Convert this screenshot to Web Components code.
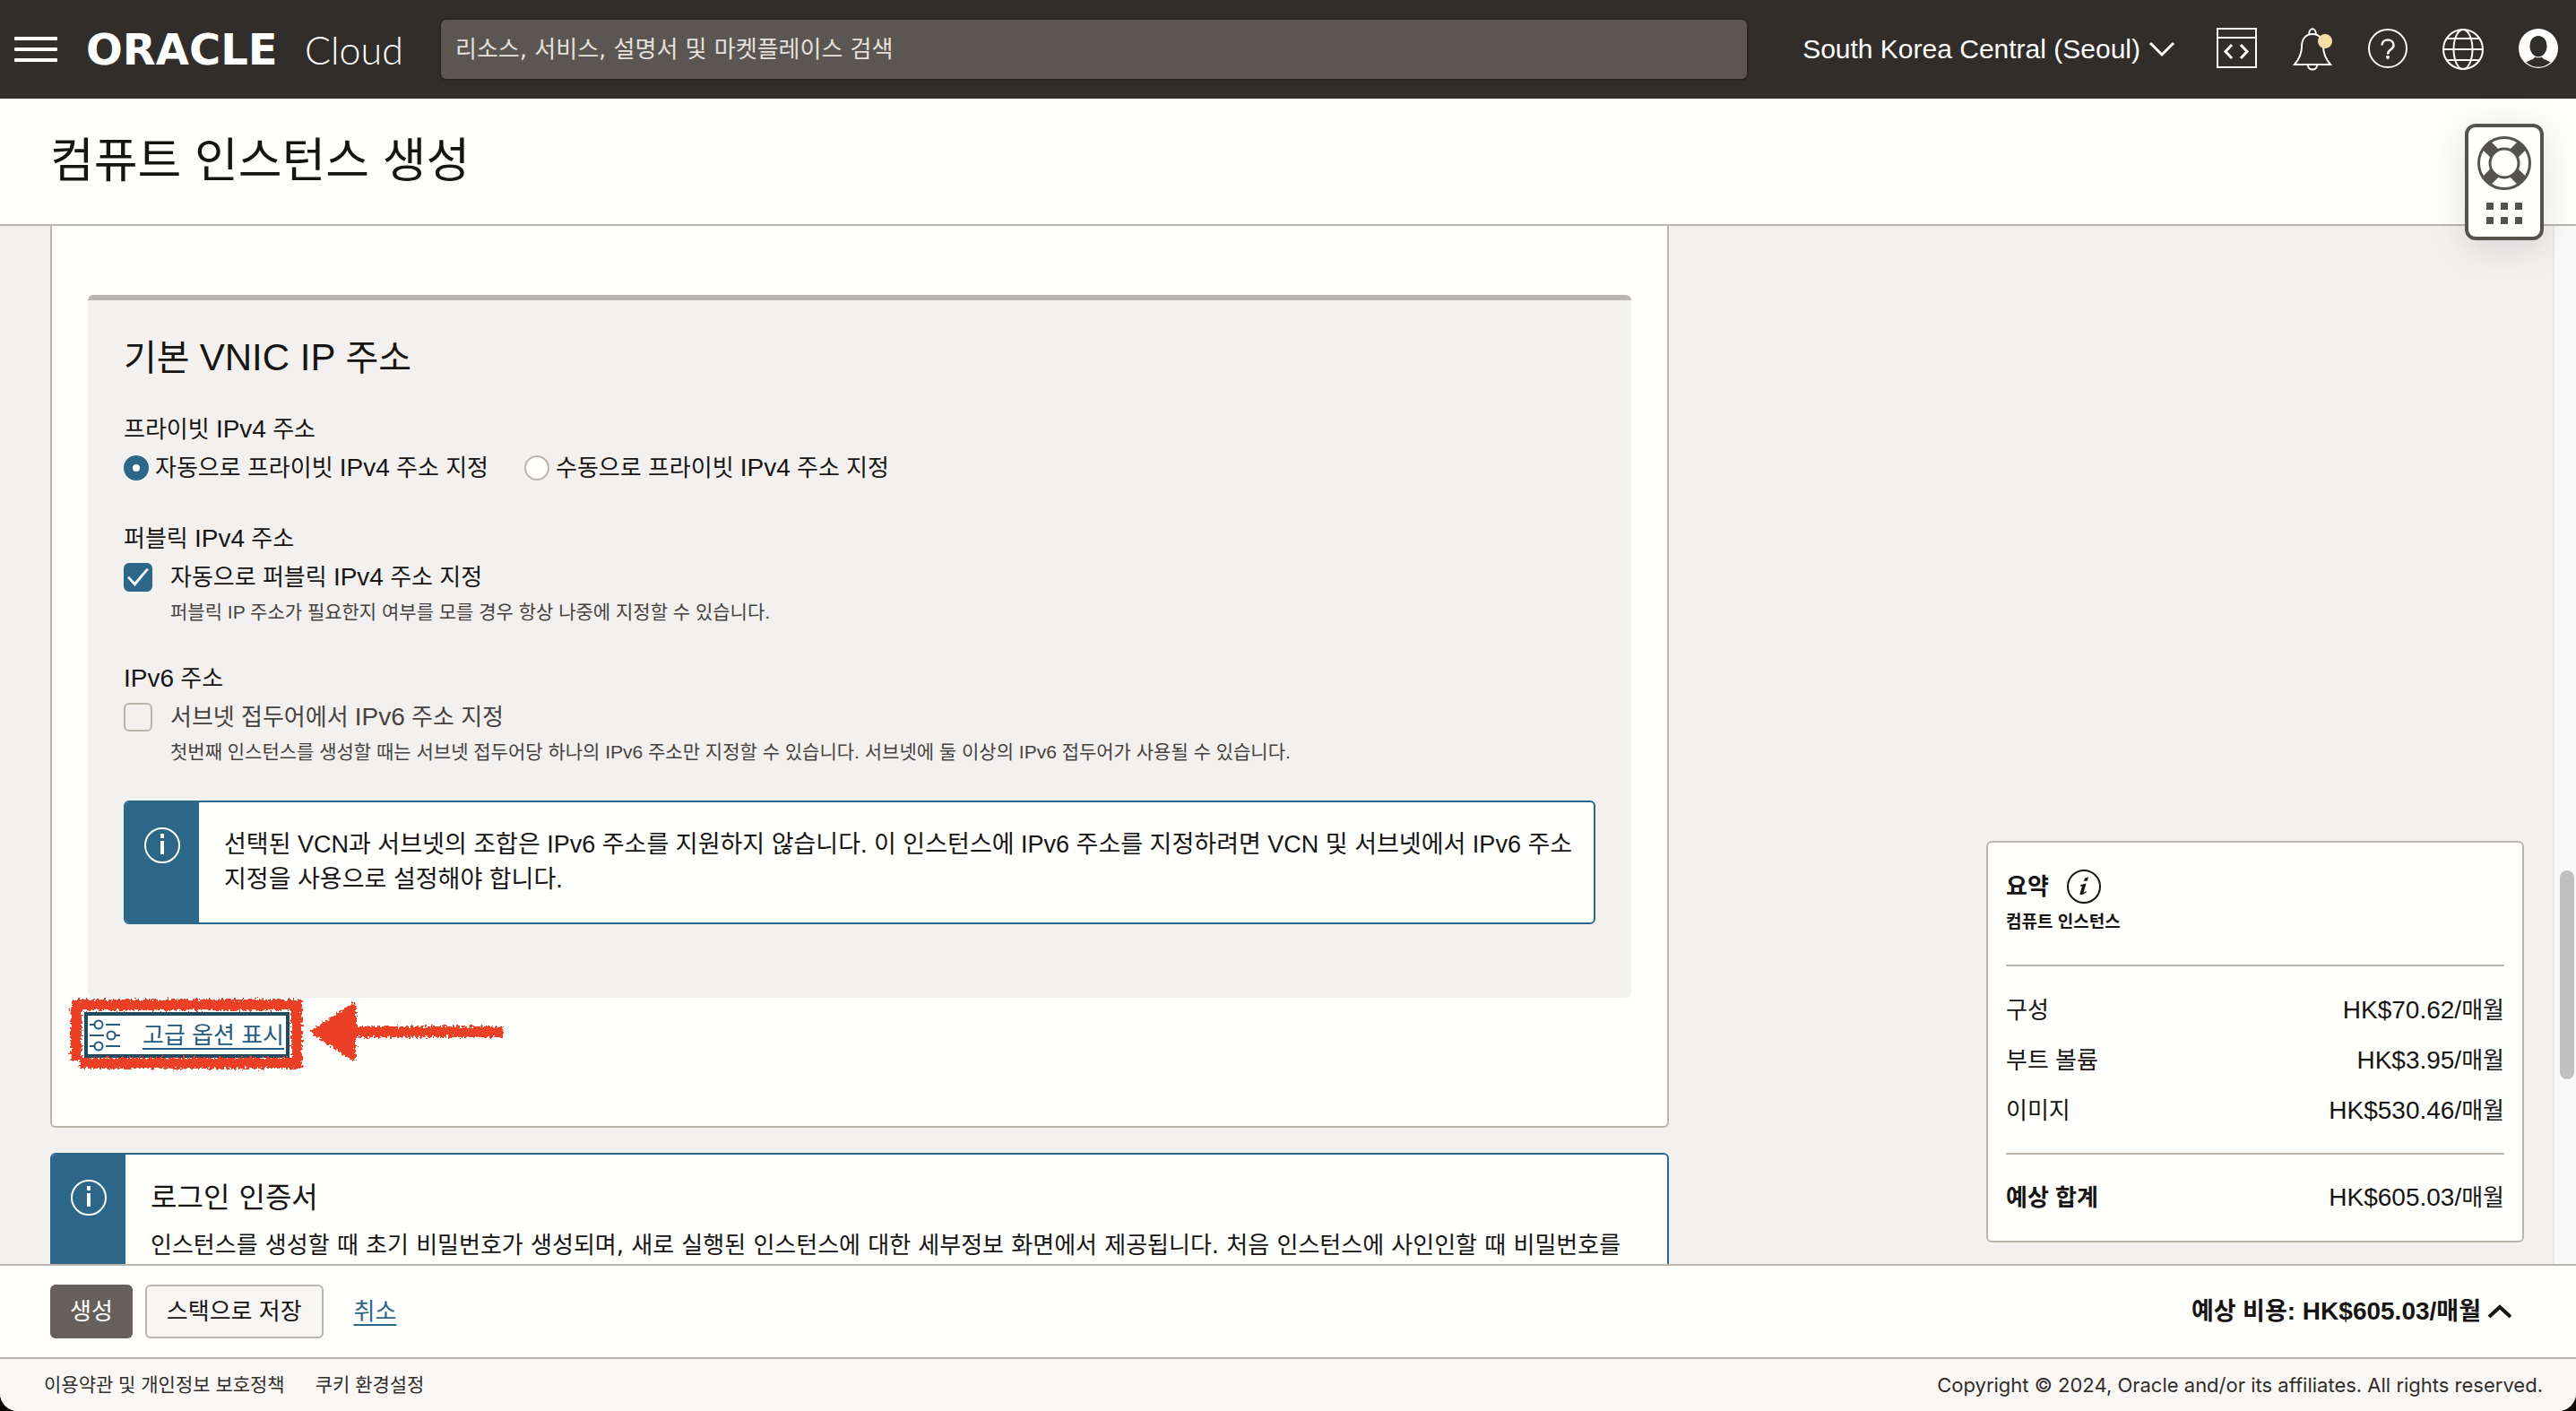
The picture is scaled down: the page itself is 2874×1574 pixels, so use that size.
<!DOCTYPE html>
<html lang="ko">
<head>
<meta charset="utf-8">
<title>컴퓨트 인스턴스 생성</title>
<style>
  html, body { margin: 0; height: 100%; }
  body {
    background: #0c0705;
    color: #161513;
    font: 26px/40px "Liberation Sans", "Noto Sans CJK KR", sans-serif;
    word-break: keep-all;
    --dark: #312d2a;
    --paper: #fefefc;
    --gray: #f3f1f0;
    --line: #bbb5b0;
    --blue: #2c6689;
    --muted: #45423f;
  }
  .en { font-size: 28px; }
  .en-lg { font-size: 42px; }
</style>
</head>
<body>
<oci-app>
  <oci-header slot="header"></oci-header>
  <oci-title slot="title">컴퓨트 인스턴스 생성</oci-title>

  <oci-card slot="content">
    <oci-panel>
      <span slot="heading">기본 <span class="en-lg" lang="en">VNIC IP</span> 주소</span>
      <oci-radio-group></oci-radio-group>
      <oci-check checked>
        <span slot="legend">퍼블릭 <span class="en" lang="en">IPv4</span> 주소</span>
        자동으로 퍼블릭 <span class="en" lang="en">IPv4</span> 주소 지정
        <span slot="hint">퍼블릭 IP 주소가 필요한지 여부를 모를 경우 항상 나중에 지정할 수 있습니다.</span>
      </oci-check>
      <oci-check disabled>
        <span slot="legend"><span class="en" lang="en">IPv6</span> 주소</span>
        서브넷 접두어에서 <span class="en" lang="en">IPv6</span> 주소 지정
        <span slot="hint">첫번째 인스턴스를 생성할 때는 서브넷 접두어당 하나의 IPv6 주소만 지정할 수 있습니다. 서브넷에 둘 이상의 IPv6 접두어가 사용될 수 있습니다.</span>
      </oci-check>
      <oci-alert>선택된 VCN과 서브넷의 조합은 IPv6 주소를 지원하지 않습니다. 이 인스턴스에 IPv6 주소를 지정하려면 VCN 및 서브넷에서 IPv6 주소 지정을 사용으로 설정해야 합니다.</oci-alert>
    </oci-panel>
    <oci-advanced></oci-advanced>
  </oci-card>
  <oci-alert slot="content">
    <span slot="title">로그인 인증서</span>
    인스턴스를 생성할 때 초기 비밀번호가 생성되며, 새로 실행된 인스턴스에 대한 세부정보 화면에서 제공됩니다. 처음 인스턴스에 사인인할 때 비밀번호를
  </oci-alert>

  <oci-summary slot="aside"></oci-summary>
  <oci-actions slot="actions"></oci-actions>
  <oci-footer slot="footer"></oci-footer>
  <oci-help-widget slot="overlay"></oci-help-widget>
</oci-app>

<script>
const base = `
  :host, *, *::before, *::after { box-sizing: border-box; }
  button, input { font: inherit; color: inherit; }
  button { border: 0; padding: 0; background: none; cursor: pointer; }
  svg { display: block; overflow: visible; flex: none; }
  .en { font-size: 28px; }
`;

function define(name, css, html) {
  const template = document.createElement('template');
  template.innerHTML = `<style>${base}${css}</style>${html}`;
  customElements.define(name, class extends HTMLElement {
    constructor() {
      super();
      this.attachShadow({ mode: 'open' }).append(template.content.cloneNode(true));
    }
    connectedCallback() {
      const box = this.shadowRoot.querySelector('input[type=checkbox]');
      if (box) {
        box.checked = this.hasAttribute('checked');
        box.disabled = this.hasAttribute('disabled');
      }
    }
  });
}

define('oci-app', `
  :host { display: flex; flex-direction: column; height: 100vh; overflow: hidden; border-radius: 0 0 20px 20px; background: var(--gray); }
  main { flex: 1; min-height: 0; display: flex; overflow: hidden; }
  .body { flex: 1; min-width: 0; display: flex; justify-content: space-between; gap: 56px; padding: 0 32px 0 56px; }
  .content { flex: 0 1 1806px; min-width: 0; display: flex; flex-direction: column; gap: 28px; }
  .content ::slotted(*) { flex: none; }
  .aside { flex: none; align-self: flex-end; width: 600px; padding-bottom: 24px; }
  .track { flex: none; width: 26px; display: flex; flex-direction: column; padding: 0 2px 0 6px; border-left: 2px solid #e8e8e8; background: #fafafa; }
  .track::before { content: ""; flex: 719; }
  .thumb { flex: 233; border-radius: 8px; background: #c1c1c1; }
  .track::after { content: ""; flex: 206; }
`, `
  <slot name="header"></slot>
  <slot name="title"></slot>
  <main>
    <div class="body">
      <div class="content"><slot name="content"></slot></div>
      <div class="aside"><slot name="aside"></slot></div>
    </div>
    <div class="track"><div class="thumb"></div></div>
  </main>
  <slot name="actions"></slot>
  <slot name="footer"></slot>
  <slot name="overlay"></slot>
`);

define('oci-header', `
  :host { display: flex; flex: none; align-items: center; height: 110px; padding: 0 20px 0 16px; background: var(--dark); color: #fff; }
  .menu { flex: none; display: flex; flex-direction: column; gap: 8px; width: 48px; }
  .menu i { height: 4px; border-radius: 1px; background: #fff; }
  .brand { flex: none; width: 396px; margin-left: 32px; display: flex; align-items: baseline; color: #fff; text-decoration: none; line-height: 52px; white-space: nowrap; }
  .brand b { flex: none; width: 244px; font: 700 48px/52px "DejaVu Sans", sans-serif; }
  .brand span { font: 300 43px/52px Lato, sans-serif; }
  .search { flex: 1; min-width: 0; height: 66px; padding: 0 16px; border: 0; border-radius: 6px; background: #5b5651; color: #e4e1dd; font-family: "DejaVu Sans", "Noto Sans CJK KR", sans-serif; box-shadow: 0 0 0 2px #292522; outline: 0; }
  .search::placeholder { color: #e4e1dd; opacity: 1; }
  .region { flex: none; display: flex; align-items: center; gap: 10px; margin: 0 48px 0 62px; font-size: 30px; white-space: nowrap; }
  .icons { display: flex; gap: 40px; }
  .line { fill: none; stroke: #fff; stroke-width: 2; }
`, `
  <button class="menu" aria-label="메뉴"><i></i><i></i><i></i></button>
  <a class="brand" href="#"><b>ORACLE</b><span>Cloud</span></a>
  <input class="search" type="search" aria-label="검색" placeholder="리소스, 서비스, 설명서 및 마켓플레이스 검색">
  <button class="region">South Korea Central (Seoul)
    <svg width="28" height="16" viewBox="0 0 28 16"><path class="line" style="stroke-width:3" d="M1 1l13 13L27 1"/></svg>
  </button>
  <div class="icons">
    <button aria-label="개발자 도구"><svg width="44" height="44"><g class="line"><path d="M0-1h43v43H0zM0 9h43"/><path style="stroke-width:3" d="M16 17l-7 7.500 7 7.500M26 17l7 7.500-7 7.500"/></g></svg></button>
    <button aria-label="알림"><svg width="44" height="44"><g class="line"><path d="M18 6c0-9 8-9 8 0M2 39c5-6 8-12 8-20 0-8 4-14 12-14s12 6 12 14 3 14 8 20zM17 40c0 6 10 6 10 0"/></g><circle cx="36" cy="13" r="8" fill="#f5dfa5"/></svg></button>
    <button aria-label="도움말"><svg width="44" height="44"><g class="line"><circle cx="22" cy="21" r="21"/><path style="stroke-width:2.500" d="M15.500 17.500c0-8 13-8 13 0 0 5-6.500 4.500-6.500 10"/></g><circle cx="22" cy="31" r="2" fill="#fff"/></svg></button>
    <button aria-label="언어"><svg width="44" height="44"><g class="line"><circle cx="22" cy="22" r="22"/><ellipse cx="22" cy="22" rx="10.500" ry="22"/><path d="M4 10h36M0 22h44M4 34h36"/></g></svg></button>
    <button aria-label="프로필"><svg width="44" height="44"><circle cx="22" cy="21" r="22" fill="#fff"/><path fill="#312d2a" d="M22 7c6 0 9.500 5 9.500 11.500 0 5-2.500 9-5.500 10.800-2 1.300-6 1.300-8 0-3-1.800-5.500-5.800-5.500-10.800C12.500 12 16 7 22 7zM18 30.500c2 1.200 6 1.200 8 0 1 3 5 3 9.500 6C28 43.500 16 43.500 8.500 36.500c4.500-3 8.500-3 9.500-6z"/></svg></button>
  </div>
`);

define('oci-title', `
  :host { display: block; flex: none; height: 142px; border-bottom: 2px solid var(--line); background: var(--paper); }
  h1 { margin: 0; padding: 38px 56px 0; font-size: 53px; line-height: 64px; font-weight: 400; }
`, `<h1><slot></slot></h1>`);

define('oci-card', `
  :host { display: block; padding: 77px 40px 80px; border: 2px solid var(--line); border-top: 0; border-radius: 0 0 6px 6px; background: var(--paper); }
`, `<slot></slot>`);

define('oci-panel', `
  :host { display: flex; flex-direction: column; gap: 36px; padding: 40px 40px 82px; border-top: 6px solid var(--line); border-radius: 6px; background: var(--gray); }
  h2 { margin: 0; font-size: 40px; line-height: 48px; font-weight: 400; }
`, `<h2><slot name="heading"></slot></h2><slot></slot>`);

define('oci-radio-group', `
  :host { display: block; }
  .legend { line-height: 40px; }
  .row { display: flex; gap: 40px; }
  label { display: flex; align-items: center; gap: 7px; height: 46px; }
  input { appearance: none; flex: none; width: 28px; height: 28px; margin: 0; border: 2px solid var(--line); border-radius: 50%; background: var(--paper); }
  input:checked { border: 10px solid var(--blue); }
`, `
  <div role="radiogroup" aria-labelledby="legend">
    <div class="legend" id="legend">프라이빗 <span class="en" lang="en">IPv4</span> 주소</div>
    <div class="row">
      <label><input type="radio" name="private" checked><span>자동으로 프라이빗 <span class="en" lang="en">IPv4</span> 주소 지정</span></label>
      <label><input type="radio" name="private"><span>수동으로 프라이빗 <span class="en" lang="en">IPv4</span> 주소 지정</span></label>
    </div>
  </div>
`);

define('oci-check', `
  :host { display: block; }
  .legend { line-height: 40px; }
  label { display: flex; align-items: center; gap: 20px; height: 46px; }
  :host([disabled]) label { color: var(--muted); }
  input { appearance: none; flex: none; display: grid; place-items: center; width: 32px; height: 32px; margin: 0; border: 2px solid var(--line); border-radius: 6px; background: transparent; }
  input:checked { border-color: var(--blue); background: var(--blue); }
  input:checked::before { content: ""; width: 24px; height: 20px; background: #fff; clip-path: polygon(0 52%, 8% 44%, 34% 78%, 90% 0, 100% 6%, 35% 100%); }
  .hint { padding: 0 0 2px 52px; font-size: 21px; line-height: 32px; color: var(--muted); }
`, `
  <div class="legend"><slot name="legend"></slot></div>
  <label><input type="checkbox"><span><slot></slot></span></label>
  <div class="hint"><slot name="hint"></slot></div>
`);

define('oci-alert', `
  :host { display: flex; border: 2px solid var(--blue); border-radius: 6px; background: var(--paper); overflow: hidden; }
  .mark { flex: none; width: 82px; padding: 28px 0 0 21px; background: var(--blue); }
  .text { padding: 28px 20px 28px 28px; font-size: 27px; line-height: 39px; }
  .title { display: none; }
  :host([slot]) .text { padding-top: 24px; font-family: "DejaVu Sans", "Noto Sans CJK KR", sans-serif; font-size: 26px; }
  :host([slot]) .title { display: block; margin-bottom: 10px; font-size: 32px; line-height: 48px; }
`, `
  <div class="mark"><svg width="40" height="40"><circle cx="20" cy="20" r="19" fill="none" stroke="#fff" stroke-width="2"/><path fill="#fff" d="M18 7h4v5h-4zM18 15h4v15h-4z"/></svg></div>
  <div class="text"><div class="title"><slot name="title"></slot></div><slot></slot></div>
`);

define('oci-advanced', `
  :host { display: block; position: relative; width: max-content; margin-top: 20px; }
  a { display: flex; align-items: center; gap: 25px; height: 43px; padding: 0 2px; outline: 4px solid #204a60; color: #285b80; text-underline-offset: 5px; text-decoration-thickness: 2px; }
  .pencil { position: absolute; left: -28px; top: -33px; pointer-events: none; }
`, `
  <a href="#"><svg width="34" height="36" fill="none" stroke="#285b80" stroke-width="2"><path d="M0 6h5M18 6h16M0 18h16M29 18h5M0 30h5M18 30h16"/><circle cx="10" cy="6" r="4.500"/><circle cx="24" cy="18" r="4.500"/><circle cx="10" cy="30" r="4.500"/></svg>고급 옵션 표시</a>
  <svg class="pencil" width="500" height="110" viewBox="0 0 500 110">
    <filter id="rough" x="-5%" y="-10%" width="110%" height="120%">
      <feTurbulence type="fractalNoise" baseFrequency="0.35" numOctaves="2" seed="4" result="n"/>
      <feDisplacementMap in="SourceGraphic" in2="n" scale="9" xChannelSelector="R" yChannelSelector="G"/>
    </filter>
    <g filter="url(#rough)" fill="none" stroke="#ec4126" stroke-width="12">
      <path d="M10 21H262M261 15V91M266 86H19M15 17V83"/>
      <path d="M320 51H491"/>
      <path fill="#ec4126" stroke-width="6" stroke-linejoin="round" d="M280 51L324 22V80z"/>
    </g>
  </svg>
`);

define('oci-summary', `
  :host { display: block; padding: 26px 20px 20px; border: 2px solid var(--line); border-radius: 6px; background: var(--paper); }
  .head { display: flex; align-items: center; gap: 20px; font-weight: 700; }
  .head h2 { margin: 0; font-size: 26px; line-height: 46px; }
  .sub { font-size: 19px; line-height: 34px; font-weight: 700; }
  dl { margin: 30px 0 0; padding: 21px 0 19px; border: solid var(--line); border-width: 2px 0; }
  dl.total { margin: 0; padding: 20px 0 0; border: 0; }
  dl.total dt { font-weight: 700; }
  .row { display: flex; justify-content: space-between; line-height: 56px; height: 56px; }
  dd { margin: 0; }
`, `
  <div class="head"><h2>요약</h2><svg width="38" height="38"><circle cx="19" cy="19" r="18" fill="none" stroke="#161513" stroke-width="2"/><path fill="#161513" d="M20 9.500l4-1-1 4-4 .5zM15.500 17l6-1.500-3 10.500 3-2 .5 1c-2 2-4 3-6 3s-1.500-1.500-1-3l2-6.500-2 .5z"/></svg></div>
  <div class="sub">컴퓨트 인스턴스</div>
  <dl>
    <div class="row"><dt>구성</dt><dd><span class="en">HK$70.62/</span>매월</dd></div>
    <div class="row"><dt>부트 볼륨</dt><dd><span class="en">HK$3.95/</span>매월</dd></div>
    <div class="row"><dt>이미지</dt><dd><span class="en">HK$530.46/</span>매월</dd></div>
  </dl>
  <dl class="total">
    <div class="row"><dt>예상 합계</dt><dd><span class="en">HK$605.03/</span>매월</dd></div>
  </dl>
`);

define('oci-actions', `
  :host { display: flex; flex: none; align-items: center; height: 104px; padding: 0 72px 0 56px; border-top: 2px solid var(--line); background: var(--paper); }
  button { height: 60px; padding: 0 22px; border-radius: 6px; }
  .primary { background: #665f5b; color: #fff; }
  .secondary { margin: 0 34px 0 14px; border: 2px solid var(--line); background: #f8f6f5; }
  a { color: var(--blue); text-underline-offset: 5px; text-decoration-thickness: 2px; }
  .cost { display: flex; align-items: center; gap: 8px; height: auto; margin-left: auto; padding: 0; font-size: 27px; font-weight: 700; }
`, `
  <button class="primary">생성</button>
  <button class="secondary">스택으로 저장</button>
  <a href="#">취소</a>
  <button class="cost"><span>예상 비용<span class="en">: HK$605.03/</span>매월</span><svg width="26" height="16"><path fill="none" stroke="#161513" stroke-width="4" d="M1 14L13 3l12 11"/></svg></button>
`);

define('oci-footer', `
  :host { display: flex; flex: none; align-items: center; gap: 34px; height: 60px; padding: 0 37px 0 49px; border-top: 2px solid var(--line); background: #faf8f7; font-size: 21px; }
  a { color: #302d2a; text-decoration: none; }
  .copy { margin-left: auto; font-family: Inter, sans-serif; font-size: 22px; color: #302d2a; }
`, `
  <a href="#">이용약관 및 개인정보 보호정책</a>
  <a href="#">쿠키 환경설정</a>
  <span class="copy">Copyright © 2024, Oracle and/or its affiliates. All rights reserved.</span>
`);

define('oci-help-widget', `
  :host { display: block; position: fixed; top: 138px; right: 36px; }
  button { display: flex; flex-direction: column; align-items: center; gap: 14px; width: 88px; height: 130px; padding-top: 10px; border: 4px solid #55534e; border-radius: 12px; background: var(--paper); box-shadow: 0 8px 40px rgba(0, 0, 0, .12); }
`, `
  <button aria-label="지원">
    <svg width="60" height="60" stroke="#55534e" fill="none"><g stroke-width="3"><circle cx="30" cy="30" r="28.500"/><circle cx="30" cy="30" r="16"/></g><path stroke-width="13" d="M41 19l8.500-8.500M19 19l-8.500-8.500M19 41l-8.500 8.500M41 41l8.500 8.500"/></svg>
    <svg width="40" height="24" fill="#55534e"><path d="M0 0h8v8H0zM16 0h8v8h-8zM32 0h8v8h-8zM0 16h8v8H0zM16 16h8v8h-8zM32 16h8v8h-8z"/></svg>
  </button>
`);
</script>
</body>
</html>
